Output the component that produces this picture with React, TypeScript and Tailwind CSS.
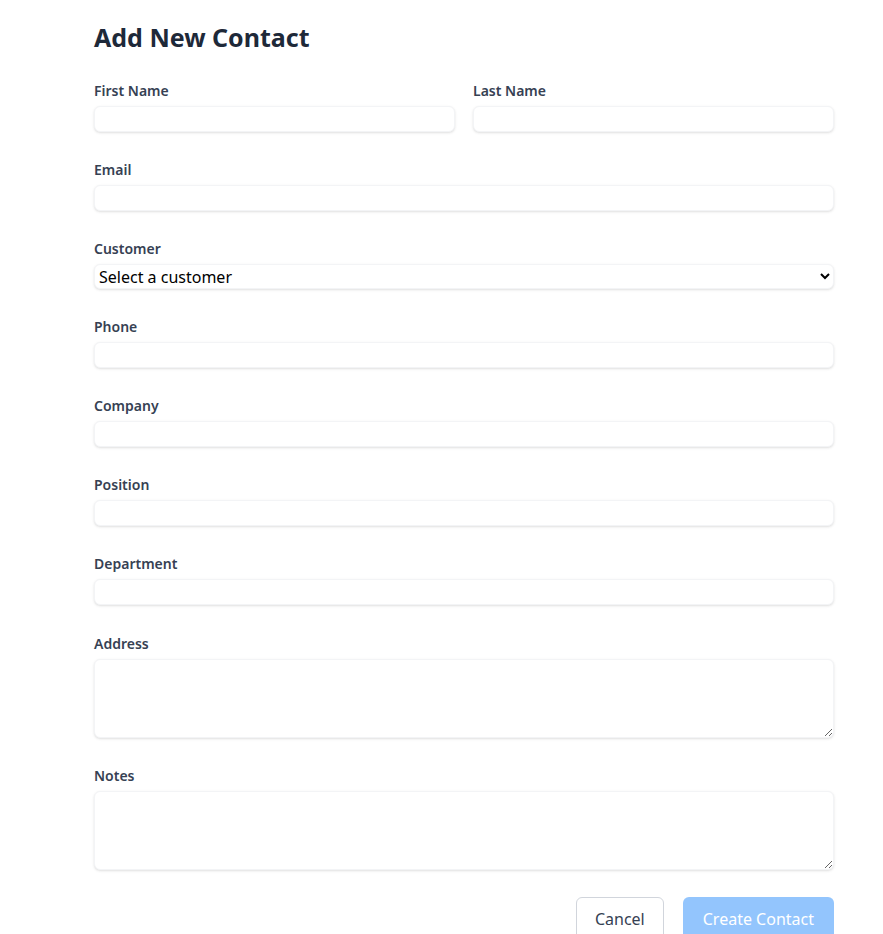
import React from 'react';

const inputCls =
  'block w-full h-[26px] rounded-md border border-gray-100 bg-white shadow-sm px-1 outline-none';

const areaCls =
  'block w-full h-[79px] rounded-md border border-gray-100 bg-white shadow-sm px-1 outline-none';

function Field({
  label,
  className,
  children,
}: {
  label: string;
  className?: string;
  children: React.ReactNode;
}) {
  return (
    <div className={className}>
      <label className="block text-sm leading-[22px] font-semibold text-gray-700 mb-1">{label}</label>
      {children}
    </div>
  );
}

export default function App() {
  return (
    <div className="min-h-screen bg-white font-['Noto_Sans',sans-serif]">
      <div className="ml-[94px] w-[740px] pt-[21px]">
        <h1 className="text-[25px] leading-8 font-bold text-gray-800 mb-[27px]">Add New Contact</h1>

        <form className="flex flex-col gap-[27px]" onSubmit={(e) => e.preventDefault()}>
          <div className="grid grid-cols-2 gap-[18px]">
            <Field label="First Name">
              <input type="text" className={inputCls} />
            </Field>
            <Field label="Last Name">
              <input type="text" className={inputCls} />
            </Field>
          </div>

          <Field label="Email">
            <input type="email" className={inputCls} />
          </Field>

          <Field label="Customer">
            <select className="block w-full h-[25px] rounded-md border border-gray-100 bg-white shadow-sm pl-0 text-black outline-none">
              <option>Select a customer</option>
            </select>
          </Field>

          <Field label="Phone">
            <input type="tel" className={inputCls} />
          </Field>

          <Field label="Company">
            <input type="text" className={inputCls} />
          </Field>

          <Field label="Position">
            <input type="text" className={inputCls} />
          </Field>

          <Field label="Department">
            <input type="text" className={inputCls} />
          </Field>

          <Field label="Address" className="mt-px">
            <textarea className={areaCls} />
          </Field>

          <Field label="Notes">
            <textarea className={areaCls} />
          </Field>

          <div className="flex justify-end gap-[19px]">
            <button type="button" className="h-[44px] px-[18px] rounded-md border border-gray-300 bg-white text-base text-gray-700">
              Cancel
            </button>
            <button type="submit" className="h-[44px] px-[20px] rounded-md bg-[#93c5fd] text-base text-white">
              Create Contact
            </button>
          </div>
        </form>
      </div>
    </div>
  );
}
